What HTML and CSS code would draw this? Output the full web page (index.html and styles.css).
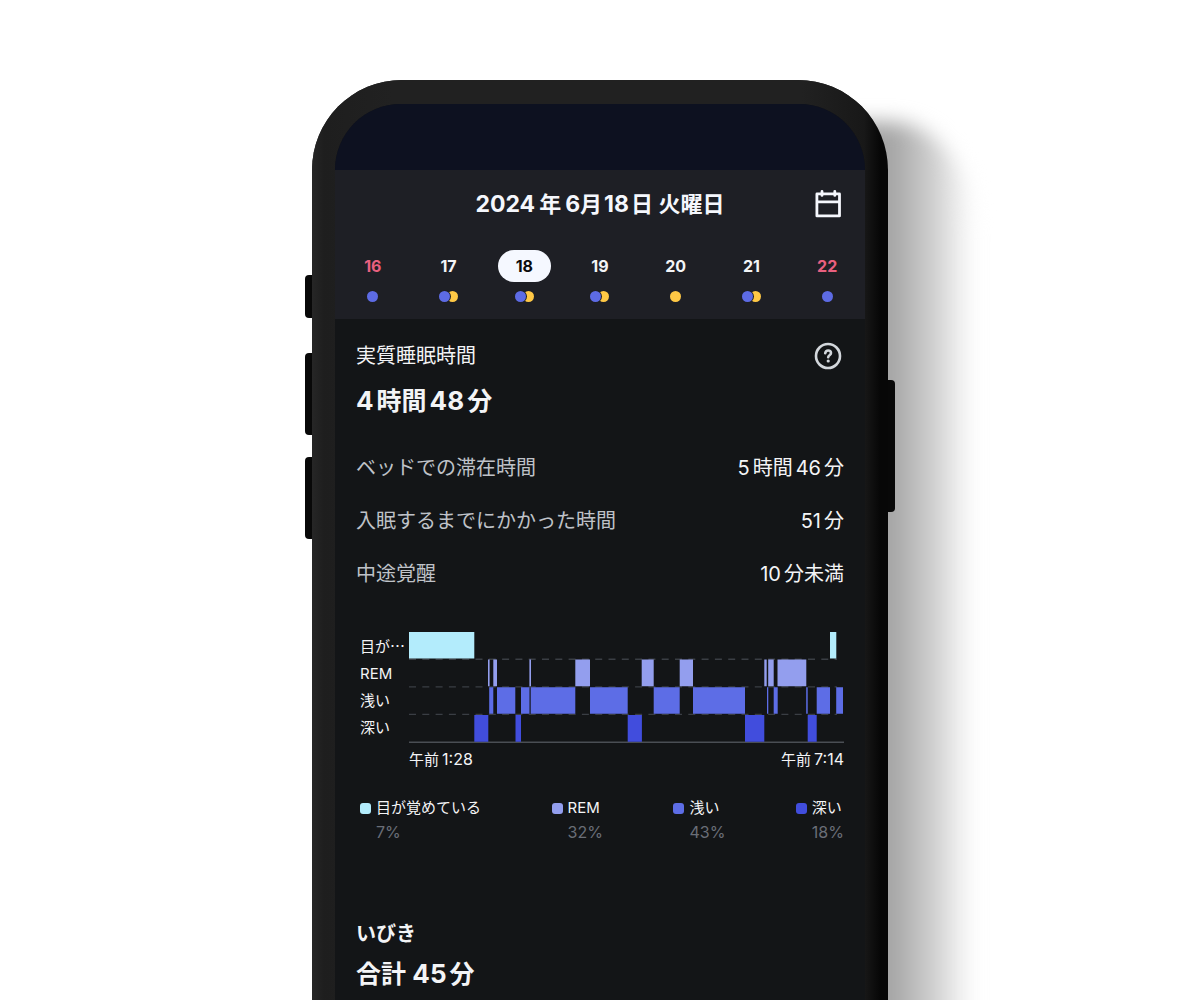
FILE: index.html
```
<!DOCTYPE html>
<html lang="ja">
<head>
<meta charset="utf-8">
<meta name="viewport" content="width=device-width, initial-scale=1">
<title>睡眠記録</title>
<link rel="stylesheet" href="styles.css">
</head>
<body>
<main class="stage">
  <div class="phone">
    <i class="key key-mute"></i>
    <i class="key key-up"></i>
    <i class="key key-down"></i>
    <i class="key key-power"></i>
    <div class="screen">
      <div class="status"></div>
      <header class="top">
        <div class="title-row">
          <h1 class="title"><span class="num-gap">2024</span>年<span class="num-lead">6</span>月<span class="num-tight">18</span>日 火曜日</h1>
          <button class="icon-btn" type="button" aria-label="カレンダー">
            <svg width="28" height="30" viewBox="0 0 28 30" fill="none" stroke="#f5f7fd" stroke-width="2.8" stroke-linecap="round" stroke-linejoin="round"><path d="M2.9 4.9h22.6v22H2.9zM2.9 12.9h22.6M8 2.4v4M20.8 2.4v4"/></svg>
          </button>
        </div>
        <nav class="days" aria-label="日付">
          <button class="day weekend" type="button"><span class="date">16</span><span class="dots"><i class="dot blue"></i></span></button>
          <button class="day" type="button"><span class="date">17</span><span class="dots"><i class="dot blue"></i><i class="dot yellow"></i></span></button>
          <button class="day selected" type="button" aria-current="date"><span class="date">18</span><span class="dots"><i class="dot blue"></i><i class="dot yellow"></i></span></button>
          <button class="day" type="button"><span class="date">19</span><span class="dots"><i class="dot blue"></i><i class="dot yellow"></i></span></button>
          <button class="day" type="button"><span class="date">20</span><span class="dots"><i class="dot yellow"></i></span></button>
          <button class="day" type="button"><span class="date">21</span><span class="dots"><i class="dot blue"></i><i class="dot yellow"></i></span></button>
          <button class="day weekend" type="button"><span class="date">22</span><span class="dots"><i class="dot blue"></i></span></button>
        </nav>
      </header>

      <section class="sleep">
        <div class="section-head">
          <h2 class="label">実質睡眠時間</h2>
          <button class="icon-btn" type="button" aria-label="ヘルプ">
            <svg width="28" height="28" viewBox="0 0 28 28" fill="none" stroke="#d3d7dc" stroke-width="2.6" stroke-linecap="round" stroke-linejoin="round"><circle cx="14" cy="14" r="12"/><path d="M11.2 11.2c.3-1.9 1.4-2.7 2.9-2.7 1.7 0 2.9 1 2.9 2.5 0 2.2-2.8 2.2-2.8 4.2"/><circle cx="14.2" cy="19" r="1.6" fill="#d3d7dc" stroke="none"/></svg>
          </button>
        </div>
        <p class="value"><span class="num-gap">4</span>時間<span class="num">48</span>分</p>

        <dl class="facts">
          <div class="fact"><dt>ベッドでの滞在時間</dt><dd><span class="num-gap">5</span>時間<span class="num">46</span>分</dd></div>
          <div class="fact"><dt>入眠するまでにかかった時間</dt><dd><span class="num-gap">51</span>分</dd></div>
          <div class="fact"><dt>中途覚醒</dt><dd><span class="num-gap">10</span>分未満</dd></div>
        </dl>

        <div class="chart">
          <ul class="stages">
            <li>目が⋯</li>
            <li>REM</li>
            <li>浅い</li>
            <li>深い</li>
          </ul>
          <svg class="plot" viewBox="0 0 435 111" preserveAspectRatio="none" role="img" aria-label="睡眠段階">
            <g stroke="#3a3e44" stroke-width="1.4" stroke-dasharray="7 6.3">
              <path d="M0 27.3H428"/><path d="M0 54.9H428"/><path d="M0 82.4H428"/>
            </g>
            <path stroke="#4a4e54" stroke-width="1.4" d="M0 110.3H435"/>
            <path fill="#b3ecfc" d="M0 0h65.3v26.6H0zM421 0h6.3v26.6H421z"/>
            <path fill="#939eee" d="M79 27.4h1.6v26.8H79zM84.3 27.4H88v26.8h-3.7zM120.4 27.4h1.6v26.8h-1.6zM166.3 27.4H181v26.8h-14.7zM232.7 27.4h12v26.8h-12zM270.7 27.4H284v26.8h-13.3zM355.3 27.4h2.4v26.8h-2.4zM359.2 27.4h5.5v26.8h-5.5zM368.5 27.4h28.8v26.8h-28.8z"/>
            <path fill="#5d6de6" d="M80.2 55.2h4.1v26.6h-4.1zM88 55.2h18.3v26.6H88zM112 55.2h8.5v26.6H112zM121.7 55.2h44.6v26.6h-44.6zM181 55.2h37.7v26.6H181zM244.7 55.2h26v26.6h-26zM284 55.2h52v26.6h-52zM358 55.2h1.3v26.6H358zM364.7 55.2h4v26.6h-4zM397.2 55.2h1.5v26.6h-1.5zM407.7 55.2H421v26.6h-13.3zM427.2 55.2h6.8v26.6h-6.8z"/>
            <path fill="#414ddd" d="M65.3 83h14v26.8h-14zM106.5 83h5.5v26.8h-5.5zM218.7 83h14.2v26.8h-14.2zM336 83h19.3v26.8H336zM398.7 83h9v26.8h-9z"/>
          </svg>
          <div class="times"><time datetime="01:28">午前<span class="num-lead">1:28</span></time><time datetime="07:14">午前<span class="num-lead">7:14</span></time></div>
        </div>

        <ul class="legend">
          <li class="item"><i class="swatch awake"></i><span>目が覚めている</span><span class="percent">7%</span></li>
          <li class="item"><i class="swatch rem"></i><span>REM</span><span class="percent">32%</span></li>
          <li class="item"><i class="swatch light"></i><span>浅い</span><span class="percent">43%</span></li>
          <li class="item"><i class="swatch deep"></i><span>深い</span><span class="percent">18%</span></li>
        </ul>
      </section>

      <section class="snore">
        <h2 class="label strong">いびき</h2>
        <p class="value">合計 <span class="num-gap">45</span>分</p>
      </section>
    </div>
  </div>
</main>
</body>
</html>
```
FILE: styles.css
```
* {
  box-sizing: border-box;
}

body {
  margin: 0;
  background: #fff;
  color: #f3f4f6;
  font-family: Inter, "Noto Sans CJK JP", sans-serif;
  font-size: 20px;
}

h1, h2, p, dl, dd, ul {
  margin: 0;
  padding: 0;
}

ul {
  list-style: none;
}

button {
  margin: 0;
  padding: 0;
  border: 0;
  background: none;
  color: inherit;
  font: inherit;
  cursor: pointer;
}

.stage {
  display: flex;
  justify-content: center;
  min-height: 100vh;
  padding-top: 80px;
  overflow: hidden;
}

/* Device frame */
.phone {
  position: relative;
  z-index: 0;
  display: flex;
  width: 100%;
  max-width: 576px;
  padding: 24px 23px 0;
  border-radius: 90px 90px 0 0;
  background: linear-gradient(90deg, #262626 0, #1e1e1e 12px, #212121 80px, #212121 490px, #181818 552px, #070707 568px, #070707 100%);
}

/* Shadow cast to the right of the device */
.phone::before {
  content: "";
  position: absolute;
  z-index: -1;
  top: 42px;
  right: -86px;
  bottom: -60px;
  width: 160px;
  border-radius: 0 84px 0 0 / 0 110px 0 0;
  background: linear-gradient(90deg, #a0a0a0 0, #a4a4a4 76px, #d0d0d0 120px, #f0f0f0 146px, #fff 100%);
  filter: blur(10px);
}

.phone::after {
  content: "";
  position: absolute;
  z-index: -1;
  inset: 0;
  border-radius: inherit;
  background: inherit;
}

.key {
  position: absolute;
  z-index: -1;
  left: -7px;
  width: 12px;
  height: 82px;
  border-radius: 4px;
  background: #080808;
}

.key-mute {
  top: 195px;
  height: 43px;
}

.key-up {
  top: 273px;
}

.key-down {
  top: 377px;
}

.key-power {
  top: 300px;
  right: -7px;
  left: auto;
  height: 132px;
}

.screen {
  flex: 1;
  min-width: 0;
  border-radius: 66px 66px 0 0;
  background: #131517;
  overflow: hidden;
}

.status {
  height: 66px;
  background: #0d1120;
}

/* Date header */
.top {
  padding-bottom: 17px;
  background: #1e1f25;
}

.title-row {
  display: grid;
  grid-template-columns: 28px 1fr 28px;
  align-items: center;
  height: 68px;
  padding: 0 23px;
  margin-bottom: 12px;
}

.title {
  grid-column: 2;
  color: #f5f7fd;
  font-size: 22px;
  font-weight: 600;
  line-height: 32px;
  text-align: center;
  white-space: nowrap;
}

.title span {
  font-size: 23px;
  font-weight: 700;
}

.icon-btn {
  display: flex;
}

.days {
  display: grid;
  grid-template-columns: repeat(7, 1fr);
}

.day {
  display: flex;
  flex-direction: column;
  align-items: center;
  gap: 9px;
  font-size: 16px;
  font-weight: 700;
}

.date {
  width: 53px;
  border-radius: 16px;
  line-height: 32px;
}

.weekend {
  color: #e9607f;
}

.selected .date {
  background: #f5f8ff;
  color: #0b0c0e;
}

.dots {
  display: flex;
}

.dot {
  width: 11px;
  height: 11px;
  border-radius: 50%;
}

.dot.blue {
  z-index: 1;
  background: #5d6be4;
}

.dot.yellow {
  background: #ffc845;
}

.blue + .yellow {
  margin-left: -3px;
}

.blue:not(:last-child) {
  box-shadow: 0 0 0 1px #1e1f25;
}

/* Sleep summary */
.sleep {
  padding: 23px 21px 0;
}

.section-head {
  display: flex;
  align-items: center;
  justify-content: space-between;
  padding-right: 2px;
}

.label {
  font-size: 20px;
  font-weight: 400;
  line-height: 28px;
}

.strong {
  font-weight: 600;
}

.value {
  font-size: 25px;
  font-weight: 600;
  line-height: 36px;
}

.value span {
  font-size: 26px;
  font-weight: 700;
}

.section-head + .value {
  margin-top: 13px;
}

.num {
  margin: 0 3px;
}

.num-gap {
  margin-right: 3px;
}

.num-lead {
  margin-left: 3px;
}

.num-tight {
  margin: 0 2px;
}

.title .num-gap {
  margin-right: 4px;
}

.title .num-lead {
  margin-left: 4px;
}

.facts {
  margin-top: 21px;
}

.fact {
  display: flex;
  align-items: center;
  justify-content: space-between;
  height: 53px;
}

.fact dt {
  color: #bfc2c8;
}

/* Sleep stage chart */
.chart {
  display: grid;
  grid-template-columns: 49px 1fr;
  gap: 6px 0;
  margin: 33px 0 0 4px;
  font-size: 15px;
}

.stages {
  padding-top: 1px;
  line-height: 27px;
}

.plot {
  display: block;
  width: 100%;
  height: 111px;
}

.times {
  grid-column: 2;
  display: flex;
  justify-content: space-between;
  line-height: 20px;
}

.times span {
  font-size: 16px;
}

.legend {
  display: flex;
  justify-content: space-between;
  margin: 26px 0 0 4px;
  font-size: 15px;
  line-height: 24px;
}

.item {
  display: grid;
  grid-template-columns: 11px auto;
  align-items: center;
  column-gap: 5px;
}

.swatch {
  width: 11px;
  height: 11px;
  border-radius: 3px;
}

.awake {
  background: #b3ecfc;
}

.rem {
  background: #939eee;
}

.light {
  background: #5d6de6;
}

.deep {
  background: #414ddd;
}

.percent {
  grid-column: 2;
  color: #6a6e77;
  font-size: 16px;
}

/* Snoring */
.snore {
  padding: 76px 21px 8px;
}

.snore .value {
  margin-top: 8px;
}
```
